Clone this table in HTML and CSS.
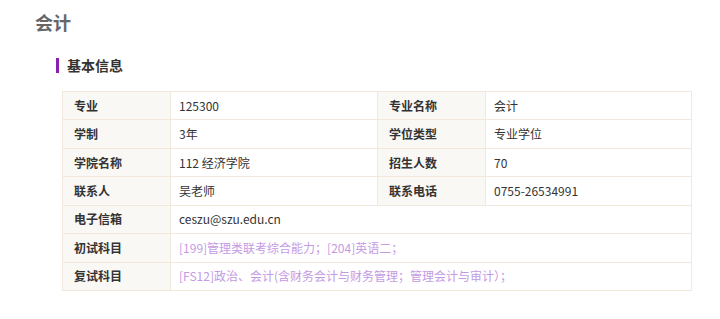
FILE: index.html
```html
<!DOCTYPE html>
<html lang="zh-CN">
<head>
<meta charset="utf-8">
<title>会计</title>
<link rel="stylesheet" href="styles.css">
</head>
<body>
<div class="page">
  <h1 class="title">会计</h1>
  <h2 class="section-title">基本信息</h2>
  <table class="info">
    <colgroup>
      <col class="c-label"><col class="c-value"><col class="c-label"><col class="c-value2">
    </colgroup>
    <tr><td class="label">专业</td><td class="value">125300</td><td class="label">专业名称</td><td class="value">会计</td></tr>
    <tr><td class="label">学制</td><td class="value">3年</td><td class="label">学位类型</td><td class="value">专业学位</td></tr>
    <tr><td class="label">学院名称</td><td class="value">112 经济学院</td><td class="label">招生人数</td><td class="value">70</td></tr>
    <tr><td class="label">联系人</td><td class="value">吴老师</td><td class="label">联系电话</td><td class="value">0755-26534991</td></tr>
    <tr><td class="label">电子信箱</td><td class="value" colspan="3">ceszu@szu.edu.cn</td></tr>
    <tr><td class="label">初试科目</td><td class="value link" colspan="3">[199]管理类联考综合能力；[204]英语二；</td></tr>
    <tr><td class="label">复试科目</td><td class="value link" colspan="3">[FS12]政治、会计(含财务会计与财务管理；管理会计与审计）；</td></tr>
  </table>
</div>
</body>
</html>
```
FILE: styles.css
```css
html, body {
  margin: 0;
  padding: 0;
  background: #ffffff;
}
body {
  font-family: "Noto Sans CJK SC", "Liberation Sans", sans-serif;
  color: #333333;
}
.page {
  padding: 10px 0 0 35px;
}
.title {
  margin: 0;
  font-size: 18px;
  line-height: 24px;
  font-weight: bold;
  color: #666666;
}
.section-title {
  margin: 21px 0 0 21px;
  font-size: 14px;
  line-height: 20px;
  font-weight: bold;
  color: #333333;
  display: flex;
  align-items: center;
  gap: 8px;
}
.section-title::before {
  content: "";
  display: block;
  width: 3px;
  height: 15px;
  background: #8a1fb0;
}
.info {
  margin: 16px 0 0 27px;
  border-collapse: collapse;
  table-layout: fixed;
  width: 629px;
  font-size: 12px;
}
.c-label { width: 108px; }
.c-value { width: 207px; }
.c-value2 { width: 206px; }
.info td {
  border: 1px solid #f3e8dc;
  height: 27.43px;
  padding: 0 8px;
  line-height: 16px;
  vertical-align: middle;
  white-space: nowrap;
}
.info td.label {
  background: #faf8f4;
  font-weight: bold;
  padding-left: 11px;
  color: #333333;
}
.info td.value {
  color: #333333;
}
.info td.link {
  color: #c49be3;
}
```
